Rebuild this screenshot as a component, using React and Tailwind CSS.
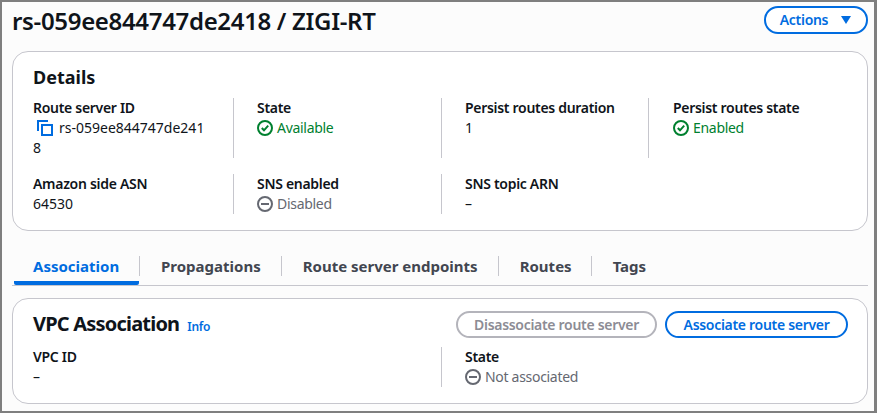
import { Fragment } from "react";

const blue = "#006ce0";

const CopyIcon = () => (
  <svg width="16" height="16" viewBox="0 0 16 16" fill="none" stroke={blue} strokeWidth="2" className="shrink-0">
    <path d="M1 11V1h10" />
    <rect x="5" y="5" width="10" height="10" />
  </svg>
);

const OkIcon = () => (
  <svg width="16" height="16" viewBox="0 0 16 16" fill="none" stroke="#00802f" strokeWidth="2" className="shrink-0">
    <circle cx="8" cy="8" r="7" />
    <path d="M4.8 8l2.2 2.3 4.2-4.6" />
  </svg>
);

const MinusIcon = () => (
  <svg width="16" height="16" viewBox="0 0 16 16" fill="none" stroke="#656871" strokeWidth="2" className="shrink-0">
    <circle cx="8" cy="8" r="7" />
    <path d="M4 8h8" />
  </svg>
);

const Label = ({ children }) => <div className="text-sm font-semibold tracking-[-0.3px] leading-5 text-[#0f141a]">{children}</div>;

const Status = ({ icon, color, children }) => (
  <div className={`flex items-center gap-1 text-sm tracking-[-0.3px] leading-5 ${color}`}>
    {icon}
    <span>{children}</span>
  </div>
);

const Value = ({ children }) => <div className="text-sm leading-5 text-[#0f141a]">{children}</div>;

const Cell = ({ label, first, className = "pl-[23px]", children }) => (
  <div className={first ? "" : `border-l border-[#c6c6cd] ${className}`}>
    <Label>{label}</Label>
    {children}
  </div>
);

const tabs = [
  { name: "Association" },
  { name: "Propagations", pad: "pr-[20px]" },
  { name: "Route server endpoints", pad: "pr-[20px]" },
  { name: "Routes", pad: "pr-[19px]" },
  { name: "Tags", pad: "pr-[20px]" },
];

export default function App() {
  return (
    <div
      className="w-[877px] h-[413px] overflow-hidden bg-[#fcfcfc] border-t-2 border-l-2 border-b-2 border-r-[3px] border-[#7f7f7f] pl-[10px] pr-[6px]"
      style={{ fontFamily: '"Noto Sans", sans-serif' }}
    >
      <div className="flex items-start justify-between h-[36px]">
        <h1 className="mt-[4px] text-2xl font-semibold leading-[30px] text-[#0f141a] tracking-[-0.33px]">rs-059ee844747de2418 / ZIGI-RT</h1>
        <button className="mt-[4px] flex items-center justify-center gap-3 w-[104px] h-[28px] rounded-full border-2 border-[#006ce0] bg-white text-sm font-semibold tracking-[-0.3px] text-[#006ce0]">
          Actions
          <svg width="12" height="10" viewBox="0 0 12 10" fill="#006ce0"><path d="M1 1h10L6 9z" /></svg>
        </button>
      </div>

      <section className="mt-[13px] h-[180px] rounded-2xl border border-[#c6c6cd] bg-white pl-5 pr-5 pt-3">
        <h2 className="text-lg font-bold leading-[26px] text-[#0f141a]">Details</h2>
        <div className="mt-[8px] grid grid-cols-[200px_208px_207px_1fr] grid-rows-[60px_40px] gap-y-4">
          <Cell label="Route server ID" first>
            <div className="flex items-center gap-[6px] pl-1 text-sm leading-5 text-[#0f141a]">
              <CopyIcon />
              <span>rs-059ee844747de241</span>
            </div>
            <Value>8</Value>
          </Cell>
          <Cell label="State">
            <Status icon={<OkIcon />} color="text-[#00802f]">Available</Status>
          </Cell>
          <Cell label="Persist routes duration">
            <Value>1</Value>
          </Cell>
          <Cell label="Persist routes state" className="pl-6">
            <Status icon={<OkIcon />} color="text-[#00802f]">Enabled</Status>
          </Cell>
          <Cell label="Amazon side ASN" first>
            <Value>64530</Value>
          </Cell>
          <Cell label="SNS enabled">
            <Status icon={<MinusIcon />} color="text-[#656871]">Disabled</Status>
          </Cell>
          <Cell label="SNS topic ARN">
            <Value>–</Value>
          </Cell>
        </div>
      </section>

      <nav className="mt-[20px] h-[35px] flex items-start border-b border-[#c6c6cd]">
        {tabs.map((t, i) => (
          <Fragment key={t.name}>
            {i === 0 ? (
              <div className="ml-[2px] w-[125px] h-[34px] pl-[19px] border-b-4 border-[#006ce0] rounded-b-[2px] text-[15px] font-bold leading-[30px] text-[#006ce0]">
                {t.name}
              </div>
            ) : (
              <div className={`h-[20px] mt-[5px] border-l border-[#c6c6cd] pl-[21px] ${t.pad} text-[15px] font-bold leading-[20px] text-[#424650]`}>
                {t.name}
              </div>
            )}
          </Fragment>
        ))}
      </nav>

      <section className="mt-[12px] h-[106px] rounded-2xl border border-[#c6c6cd] bg-white pl-5 pr-[19px] pt-[12px]">
        <div className="flex items-center justify-between h-[27px]">
          <div className="flex items-baseline gap-[8px] -mt-[2px]">
            <h2 className="text-xl font-bold tracking-[-0.8px] leading-[26px] text-[#0f141a]">VPC Association</h2>
            <a className="text-xs font-semibold tracking-[-0.3px] text-[#006ce0]">Info</a>
          </div>
          <div className="flex gap-2">
            <button className="w-[201px] h-[27px] rounded-full border-2 border-[#b4b4bb] text-sm font-semibold tracking-[-0.3px] text-[#8c8c94]">
              Disassociate route server
            </button>
            <button className="w-[183px] h-[27px] rounded-full border-2 border-[#006ce0] text-sm font-semibold tracking-[-0.3px] text-[#006ce0]">
              Associate route server
            </button>
          </div>
        </div>
        <div className="mt-[9px] grid grid-cols-[408px_1fr] h-[40px]">
          <Cell label="VPC ID" first>
            <Value>–</Value>
          </Cell>
          <Cell label="State">
            <Status icon={<MinusIcon />} color="text-[#656871]">Not associated</Status>
          </Cell>
        </div>
      </section>
    </div>
  );
}
